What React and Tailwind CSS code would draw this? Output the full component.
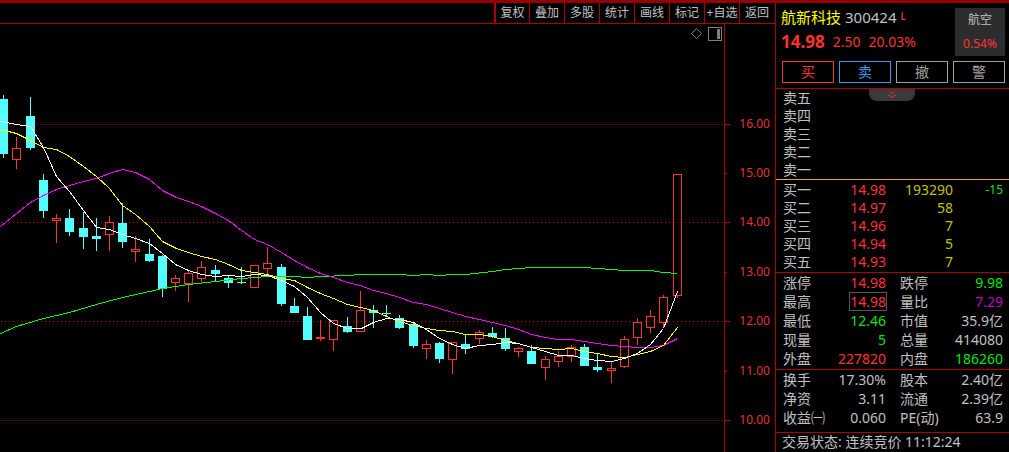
const tools = ['复权', '叠加', '多股', '统计', '画线', '标记', '+自选', '返回']

// [x, high, body top, body bottom, low, 1 = up]
const candles = [
  [3, 95, 99, 154, 158, 0], [16, 137, 148, 160, 169, 1], [30, 97, 116, 148, 150, 0], [43, 174, 180, 211, 218, 0],
  [56, 214, 218, 221, 243, 1], [69, 209, 218, 232, 236, 0], [83, 212, 228, 237, 249, 0], [96, 218, 236, 239, 251, 0],
  [109, 216, 222, 235, 251, 1], [122, 203, 223, 242, 248, 0], [135, 236, 249, 252, 262, 1], [149, 239, 254, 261, 262, 0],
  [162, 255, 256, 289, 297, 0], [175, 275, 278, 283, 291, 1], [188, 270, 273, 284, 302, 1], [201, 261, 267, 279, 282, 1],
  [215, 265, 270, 274, 281, 0], [228, 276, 278, 283, 288, 0], [241, 267, 282, 283, 284, 0], [254, 265, 265, 288, 288, 1],
  [267, 247, 263, 269, 276, 1], [281, 264, 267, 304, 306, 0], [294, 298, 306, 313, 313, 0], [307, 307, 316, 340, 340, 0],
  [320, 320, 337, 339, 341, 1], [333, 320, 320, 340, 351, 1], [347, 317, 326, 332, 333, 0], [360, 291, 310, 332, 332, 1],
  [373, 305, 310, 313, 328, 0], [386, 305, 313, 314, 317, 0], [399, 315, 318, 328, 329, 0], [413, 323, 324, 346, 348, 0],
  [426, 340, 344, 349, 359, 1], [439, 342, 343, 359, 363, 0], [452, 342, 342, 360, 374, 1], [465, 335, 344, 349, 354, 0],
  [479, 330, 332, 339, 344, 1], [492, 327, 333, 337, 338, 0], [505, 328, 338, 349, 351, 0], [518, 347, 348, 352, 357, 1],
  [531, 345, 351, 364, 364, 0], [545, 356, 359, 368, 380, 1], [558, 351, 356, 362, 367, 1], [571, 345, 347, 357, 362, 1],
  [584, 344, 347, 366, 366, 0], [597, 354, 367, 370, 372, 0], [611, 361, 368, 371, 383, 1], [624, 336, 339, 367, 368, 1],
  [637, 318, 322, 338, 345, 1], [650, 310, 316, 328, 333, 1], [663, 295, 297, 323, 328, 1], [677, 174, 174, 296, 298, 1],
]

const averages = [
  { color: '#00ff00', points: '0,333 16,326 43,318 69,312 96,304 122,297 149,291 162,288 188,284 215,281 241,278 267,276 294,276 307,277 320,276 347,275 360,274 399,274 413,275 426,274 439,275 452,274 465,274 492,271 505,269 531,267 584,267 611,269 624,270 650,270 663,272 677,273' },
  { color: '#ff00ff', points: '0,226 16,213 30,202 43,195 56,189 69,185 83,181 96,178 109,173 122,169 135,172 149,179 162,190 176,197 188,201 201,206 215,213 228,220 241,230 254,239 267,244 281,252 294,260 307,267 320,273 333,277 347,282 360,285 373,290 386,293 399,297 413,302 426,304 439,308 452,312 465,316 479,319 492,322 505,325 518,329 531,334 545,337 558,339 571,339 584,341 597,343 611,345 624,346 637,347 650,347 663,345 677,338' },
  { color: '#ffff00', points: '0,130 4,130 16,133 30,140 43,147 56,149 69,156 83,166 96,176 109,188 122,205 135,214 149,226 162,241 176,248 188,252 201,256 215,259 228,264 241,270 254,272 267,274 281,278 294,280 307,287 320,293 333,298 347,304 360,307 373,310 386,316 399,321 413,325 426,328 439,330 452,331 465,334 479,334 492,336 505,340 518,343 531,347 545,348 558,349 571,348 584,351 597,353 611,356 624,357 637,354 650,351 663,345 677,327' },
  { color: '#ffffff', points: '0,121 6,122 16,124 30,126 43,147 56,176 69,191 83,210 96,227 109,229 122,234 135,238 149,243 162,253 175,264 188,270 201,274 215,276 228,275 241,276 254,274 267,275 281,280 294,286 307,297 320,312 333,323 347,328 361,328 373,322 386,318 399,319 413,322 426,329 439,338 452,344 465,348 479,345 492,344 505,342 518,343 531,347 545,351 558,355 571,355 584,358 597,360 611,361 624,358 637,353 650,344 663,328 677,291' },
]

const scale = [
  ['16.00', 124, true], ['15.00', 173, false], ['14.00', 222, true], ['13.00', 272, false],
  ['12.00', 321, true], ['11.00', 371, false], ['10.00', 420, true],
]

const sells = ['卖五', '卖四', '卖三', '卖二', '卖一']
const buys = [
  ['买一', '14.98', '193290', '-15'],
  ['买二', '14.97', '58', ''],
  ['买三', '14.96', '7', ''],
  ['买四', '14.94', '5', ''],
  ['买五', '14.93', '7', ''],
]

const red = 'text-[#ff3232]'
const green = 'text-[#00e600]'
const gray = 'text-[#c0c0c0]'

const quotes = [
  ['涨停', '14.98', red, '跌停', '9.98', green],
  ['最高', '14.98', red, '量比', '7.29', 'text-[#c000c0]', true],
  ['最低', '12.46', green, '市值', '35.9亿', gray],
  ['现量', '5', green, '总量', '414080', gray],
  ['外盘', '227820', red, '内盘', '186260', green],
]
const finance = [
  ['换手', '17.30%', gray, '股本', '2.40亿', gray],
  ['净资', '3.11', gray, '流通', '2.39亿', gray],
  ['收益㈠', '0.060', gray, 'PE(动)', '63.9', gray],
]

function Chart() {
  return (
    <svg viewBox="0 24 775 428" className="block w-full h-auto" role="img" aria-label="K线图">
      <g shapeRendering="crispEdges" fill="none">
        {scale.map(([label, y, major]) => (
          <g key={label} stroke="#b00000">
            {major && <line x1="1" x2="724" y1={y + 0.5} y2={y + 0.5} strokeDasharray="1 3" />}
            <line x1="724" x2={major ? 730 : 727} y1={y + 0.5} y2={y + 0.5} />
          </g>
        ))}
        <line x1="724.5" x2="724.5" y1="24" y2="452" stroke="#b00000" />

        {candles.map(([x, high, top, bottom, low, up]) => up ? (
          <g key={x} stroke="#ff3232">
            <line x1={x + 0.5} x2={x + 0.5} y1={high} y2={top} />
            <line x1={x + 0.5} x2={x + 0.5} y1={bottom} y2={low} />
            <rect x={x - 3.5} y={top + 0.5} width="8" height={bottom - top - 1} />
          </g>
        ) : (
          <g key={x} fill="#54ffff">
            <rect x={x} y={high} width="1" height={low - high} />
            <rect x={x - 4} y={top} width="9" height={bottom - top} />
          </g>
        ))}

        {averages.map(a => (
          <polyline key={a.color} points={a.points} stroke={a.color} transform="translate(0.5 0.5)" />
        ))}

        <rect x="708.5" y="27.5" width="13" height="13" stroke="#808080" />
        <rect x="717" y="29" width="3" height="10" fill="#808080" />
      </g>
      <path d="M696.5 28.5l5 5-5 5-5-5z" fill="none" stroke="#808080" />
      <g fill="#e63232" fontSize="12" textAnchor="end">
        {scale.map(([label, y]) => <text key={label} x="770" y={y + 4}>{label}</text>)}
      </g>
    </svg>
  )
}

function Stats({ rows, label }) {
  return (
    <table className="w-full table-fixed border-collapse" aria-label={label}>
      <colgroup>
        <col className="w-[50px]" /><col className="w-[53px]" /><col className="w-[60px]" /><col />
      </colgroup>
      <tbody>
        {rows.map(([a, av, ac, b, bv, bc, boxed]) => (
          <tr key={a} className="h-[19px] leading-[19px]">
            <th scope="row" className="p-0 text-left font-normal whitespace-nowrap">{a}</th>
            <td className={`p-0 text-right ${ac}`}>
              {boxed ? <span className="inline-block leading-[17px] ring-1 ring-[#585858]">{av}</span> : av}
            </td>
            <th scope="row" className="p-0 pl-[14px] text-left font-normal whitespace-nowrap">{b}</th>
            <td className={`p-0 text-right ${bc}`}>{bv}</td>
          </tr>
        ))}
      </tbody>
    </table>
  )
}

function Sidebar() {
  return (
    <aside className="w-[234px] shrink-0 border-l border-[#b00000] text-[14px] text-[#c0c0c0]">
      <header className="relative h-[86px] border-b border-[#b00000] px-1 pt-[5px] flex flex-col justify-between pb-[5px]">
        <div className="flex justify-between pl-px">
          <div>
            <h1 className="flex items-start text-[15px] leading-[18px] font-normal">
              <span className="text-[#ffff00]">航新科技</span>
              <span className="ml-1">300424</span>
              <span className="ml-1 text-[10px] leading-[16px] font-medium text-[#ff3232]">L</span>
            </h1>
            <div className="mt-[6px] flex items-center leading-[20px] text-[#ff3232]">
              <strong className="text-[17px]">14.98</strong>
              <span className="ml-2">2.50</span>
              <span className="ml-2">20.03%</span>
            </div>
          </div>
          <div className="flex h-12 w-[50px] flex-col justify-around bg-[#2d2d2f] text-center text-[12px] leading-[20px]">
            <span>航空</span>
            <span className="text-[#ff3232]">0.54%</span>
          </div>
        </div>
        <div className="grid grid-cols-4 gap-[5px] pl-[2px] leading-[20px]">
          <button className="border border-[#ff3232] text-[#ff3232]">买</button>
          <button className="border border-[#3c96e6] text-[#3c96e6]">卖</button>
          <button className="border border-[#a0a0a0] text-[#a0a0a0]">撤</button>
          <button className="border border-[#a0a0a0] text-[#a0a0a0]">警</button>
        </div>
        <button aria-label="展开" className="absolute top-full left-[93px] mt-px flex h-3 w-[46px] justify-center rounded-b-lg bg-[#3a3a3a]">
          <svg width="10" height="8" viewBox="0 0 10 8" className="mt-[2px]" fill="none" stroke="#ff3232">
            <path d="M3 0.5l2 2 2-2M1 3.5l4 3 4-3" />
          </svg>
        </button>
      </header>

      <ul className="border-b border-[#e6a03c] px-[7px] leading-[18px]">
        {sells.map(s => <li key={s}>{s}</li>)}
      </ul>
      <div className="border-b border-[#b00000] py-px pl-[7px] pr-[6px]">
        <table className="w-full table-fixed border-collapse" aria-label="买盘">
          <colgroup>
            <col className="w-[50px]" /><col className="w-[53px]" /><col className="w-[67px]" /><col />
          </colgroup>
          <tbody>
            {buys.map(([name, price, volume, change]) => (
              <tr key={name} className="h-[18px] leading-[18px]">
                <th scope="row" className="p-0 text-left font-normal">{name}</th>
                <td className="p-0 text-right text-[#ff3232]">{price}</td>
                <td className="p-0 text-right text-[#c0c000]">{volume}</td>
                <td className="p-0 text-right text-[12px] text-[#00e600]">{change}</td>
              </tr>
            ))}
          </tbody>
        </table>
      </div>
      <div className="border-b border-[#b00000] pb-px pl-[7px] pr-[6px]"><Stats rows={quotes} label="行情" /></div>
      <div className="border-b border-[#b00000] pb-[5px] pl-[7px] pr-[6px]"><Stats rows={finance} label="财务" /></div>
      <p className="pl-[6px] leading-[18px]">交易状态: 连续竞价 11:12:24</p>
    </aside>
  )
}

export default function App() {
  return (
    <div className="min-h-screen bg-black font-['Noto_Sans','Noto_Sans_CJK_SC',sans-serif]">
      <div className="h-[3px] bg-[#960000]" />
      <div className="flex">
        <main className="min-w-0 flex-1">
          <nav className="flex h-[21px] justify-end border-b border-[#b00000] pr-px text-[12px] text-[#c0c0c0]">
            {tools.map(t => (
              <button key={t} className="w-[35px] border-l border-[#b00000] whitespace-nowrap leading-[20px] first:border-l-2">{t}</button>
            ))}
          </nav>
          <Chart />
        </main>
        <Sidebar />
      </div>
    </div>
  )
}
